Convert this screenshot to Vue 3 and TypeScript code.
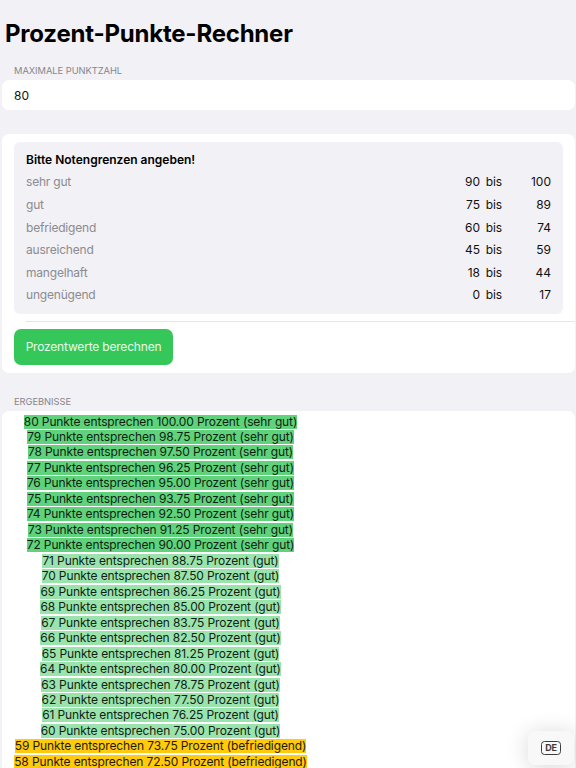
<script setup lang="ts">
interface Grade {
  name: string
  from: number
  to: number
}

interface Result {
  points: number
  percent: string
  grade: string
  tone: string
}

const maxPoints = 80

const grades: Grade[] = [
  { name: 'sehr gut', from: 90, to: 100 },
  { name: 'gut', from: 75, to: 89 },
  { name: 'befriedigend', from: 60, to: 74 },
  { name: 'ausreichend', from: 45, to: 59 },
  { name: 'mangelhaft', from: 18, to: 44 },
  { name: 'ungenügend', from: 0, to: 17 },
]

const tones = ['very-good', 'good', 'fair']

const results: Result[] = Array.from({ length: 23 }, (_, i) => {
  const points = maxPoints - i
  const percent = (points / maxPoints) * 100
  const index = grades.findIndex((g) => percent >= g.from)
  return { points, percent: percent.toFixed(2), grade: grades[index].name, tone: tones[index] }
})
</script>

<template>
  <main class="screen">
    <h1 class="title">Prozent-Punkte-Rechner</h1>

    <h2 class="section-label">MAXIMALE PUNKTZAHL</h2>
    <section class="card points">{{ maxPoints }}</section>

    <section class="card limits">
      <div class="panel">
        <h3 class="panel-title">Bitte Notengrenzen angeben!</h3>
        <div v-for="g in grades" :key="g.name" class="grade">
          <span class="grade-name">{{ g.name }}</span>
          <span class="from">{{ g.from }}</span>
          <span class="until">bis</span>
          <span class="to">{{ g.to }}</span>
        </div>
      </div>
      <div class="divider"></div>
      <button class="calculate" type="button">Prozentwerte berechnen</button>
    </section>

    <h2 class="section-label results-label">ERGEBNISSE</h2>
    <section class="card results">
      <div class="list">
        <div v-for="r in results" :key="r.points" class="line">
          <span class="mark" :class="r.tone">{{ r.points }} Punkte entsprechen {{ r.percent }} Prozent ({{ r.grade }})</span>
        </div>
      </div>
    </section>

    <div class="keyboard">
      <span class="lang">DE</span>
    </div>
  </main>
</template>

<style>
body {
  margin: 0;
  background: #f2f1f6;
}
</style>

<style scoped>
.screen {
  position: relative;
  box-sizing: border-box;
  width: 576px;
  height: 768px;
  padding: 18px 1px 0 2px;
  overflow: hidden;
  display: flex;
  flex-direction: column;
  background: #f2f1f6;
  color: #111;
  font: 12px/16px Inter, 'Liberation Sans', sans-serif;
}

.title {
  flex: none;
  margin: 0 0 0 3px;
  height: 32px;
  font-size: 24px;
  line-height: 32px;
  font-weight: 700;
  letter-spacing: -0.21px;
  white-space: nowrap;
  color: #000;
}

.section-label {
  flex: none;
  margin: 15px 0 0 12px;
  height: 12px;
  font-size: 9.3px;
  line-height: 12px;
  font-weight: 400;
  letter-spacing: -0.02px;
  color: #86868b;
}

.card {
  flex: none;
  box-sizing: border-box;
  background: #fff;
  border-radius: 7px;
}

.points {
  height: 30px;
  margin-top: 3px;
  padding: 8px 12px 6px;
}

.limits {
  height: 239px;
  margin-top: 24px;
  padding: 8px 0 0 12px;
}

.panel {
  box-sizing: border-box;
  height: 172px;
  margin-right: 12px;
  padding: 7px 12px 0;
  border-radius: 6px;
  background: #f2f1f6;
}

.panel-title {
  margin: 0;
  height: 22.4px;
  font-size: 12px;
  line-height: 22px;
  font-weight: 600;
  color: #000;
}

.grade {
  display: grid;
  grid-template-columns: 1fr 60px 22px 49px;
  height: 22.6px;
  line-height: 22.6px;
}

.grade-name {
  letter-spacing: -0.2px;
  color: #8b8b90;
}

.from,
.until,
.to {
  text-align: right;
}

.until {
  letter-spacing: -0.15px;
}

.divider {
  height: 1px;
  margin: 7px 0 7px 12px;
  background: #e6e6e9;
}

.calculate {
  display: block;
  width: 159px;
  height: 36px;
  padding: 0;
  border: 0;
  border-radius: 7px;
  background: #35c759;
  color: #e6faea;
  font: inherit;
  letter-spacing: -0.19px;
  white-space: nowrap;
}

.results-label {
  margin-top: 23px;
}

.results {
  height: 380px;
  margin-top: 3px;
  padding: 2.8px 12px 0;
}

.list {
  width: 293px;
  display: flex;
  flex-direction: column;
}

.line {
  height: 15.48px;
  display: flex;
  align-items: center;
  justify-content: center;
}

.mark {
  height: 14px;
  line-height: 14px;
  letter-spacing: -0.12px;
  white-space: nowrap;
  color: #0d1f12;
}

.very-good {
  background: #5fd27b;
}

.good {
  background: #9be3ad;
}

.fair {
  background: #ffcb0c;
  color: #1f1a05;
}

.keyboard {
  position: absolute;
  left: 528px;
  top: 731px;
  width: 46px;
  height: 34px;
  display: flex;
  align-items: center;
  justify-content: center;
  border-radius: 7px;
  background: #f8f8f8;
  box-shadow: 0 2px 22px rgba(0, 0, 0, 0.16);
}

.lang {
  box-sizing: border-box;
  width: 20px;
  height: 14px;
  border: 1.5px solid #3c3c3c;
  border-radius: 3.5px;
  font-size: 9px;
  line-height: 12px;
  font-weight: 700;
  text-align: center;
  letter-spacing: -0.2px;
  color: #3c3c3c;
}
</style>
